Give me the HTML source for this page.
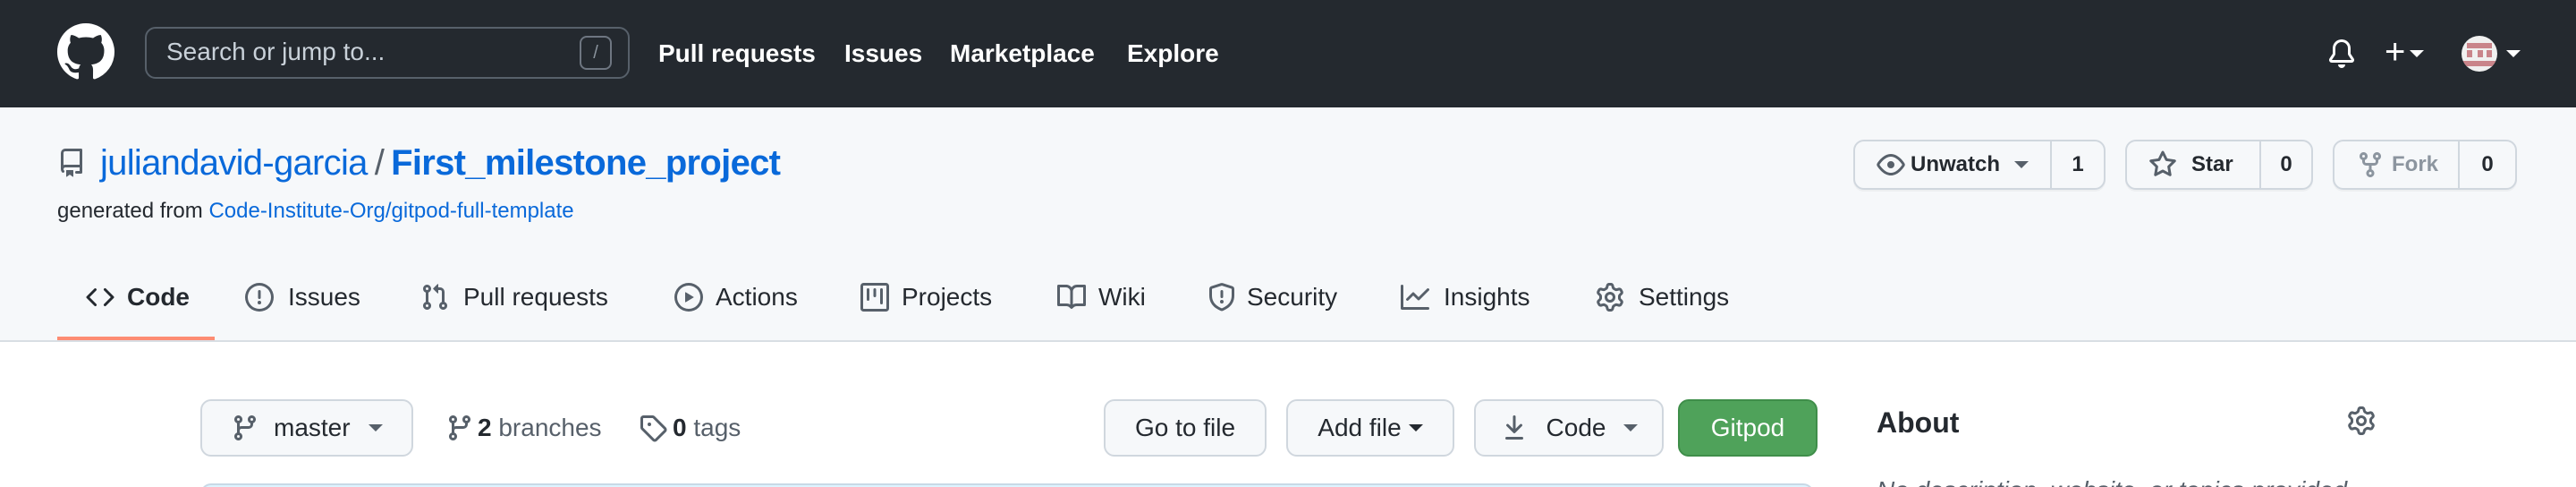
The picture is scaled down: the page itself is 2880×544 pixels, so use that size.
<!DOCTYPE html>
<html><head><meta charset="utf-8">
<style>
*{box-sizing:border-box;margin:0;padding:0}
html,body{width:2880px;height:544px;overflow:hidden;background:#fff}
#w{zoom:2;width:1440px;height:272px;position:relative;font-family:"Liberation Sans",sans-serif;color:#24292f;overflow:hidden}
.a{position:absolute}
path{fill-rule:evenodd}
.hd{left:0;top:0;width:1440px;height:60px;background:#24292f}
.nav{color:#fff;font-weight:bold;font-size:14px;top:22px}
.rh{left:0;top:60px;width:1440px;height:131px;background:#f6f8fa;border-bottom:1px solid #d8dee4}
.btn{border:1px solid #d0d7de;border-radius:6px;background:#f6f8fa;box-shadow:0 1px 0 rgba(27,31,36,.04);font-size:12px;font-weight:bold;display:flex;align-items:center}
.btn2{border:1px solid #d0d7de;border-radius:6px;background:#f6f8fa;font-size:14px;font-weight:bold;display:flex;align-items:center;justify-content:center;height:32px;top:223px}
.tab{font-size:14px;top:158px;color:#24292f}
svg{display:block}
.ic{fill:#57606a}
.car{display:inline-block;width:0;height:0;border-left:4px solid transparent;border-right:4px solid transparent;border-top:4px solid currentColor;vertical-align:middle}
</style></head><body><div id="w">
<div class="a hd"></div>
<svg class="a" style="left:32px;top:13px" width="32" height="32" viewBox="0 0 16 16"><path fill="#fff" d="M8 0C3.58 0 0 3.58 0 8c0 3.540 2.290 6.530 5.470 7.590.4.07.55-.17.55-.38 0-.19-.01-.82-.01-1.49-2.01.37-2.53-.49-2.690-.94-.09-.23-.48-.94-.82-1.130-.28-.15-.68-.52-.01-.53.63-.01 1.080.58 1.230.82.72 1.210 1.870.87 2.330.66.07-.52.28-.87.51-1.070-1.780-.2-3.640-.89-3.640-3.950 0-.87.31-1.590.82-2.150-.08-.2-.36-1.020.08-2.120 0 0 .67-.21 2.200.82.64-.18 1.320-.27 2-.27.68 0 1.360.09 2 .27 1.530-1.040 2.200-.82 2.200-.82.44 1.100.16 1.920.08 2.120.51.56.82 1.270.82 2.150 0 3.070-1.870 3.750-3.650 3.950.29.25.54.73.54 1.480 0 1.070-.01 1.930-.01 2.200 0 .21.15.46.55.38A8.013 8.013 0 0016 8c0-4.420-3.580-8-8-8z"/></svg>
<div class="a" style="left:81px;top:15px;width:271px;height:29px;border:1px solid #57606a;border-radius:6px"></div>
<div class="a" style="left:93px;top:21px;color:#c9d1d9;font-size:14px">Search or jump to...</div>
<div class="a" style="left:324px;top:20px;width:18px;height:19px;border:1px solid #6e7681;border-radius:4px;color:#8b949e;font-size:10px;text-align:center;line-height:17px">/</div>
<div class="a nav" style="left:368px">Pull requests</div>
<div class="a nav" style="left:472px">Issues</div>
<div class="a nav" style="left:531px">Marketplace</div>
<div class="a nav" style="left:630px">Explore</div>
<svg class="a" style="left:1301px;top:22px" width="16" height="16" viewBox="0 0 16 16"><path fill="#fff" d="M8 16a2 2 0 001.985-1.75c.017-.137-.097-.25-.235-.25h-3.5c-.138 0-.252.113-.235.25A2 2 0 008 16zM3 5a5 5 0 0110 0v2.947c0 .05.015.098.042.139l1.703 2.555A1.519 1.519 0 0113.482 13H2.518a1.516 1.516 0 01-1.263-2.360l1.703-2.554A.255.255 0 003 7.947V5zm5-3.5A3.5 3.5 0 004.5 5v2.947c0 .346-.102.683-.294.970l-1.703 2.556a.017.017 0 00-.003.010l.001.006c0 .002.002.004.004.006l.006.004.007.001h10.964l.007-.001.006-.004.004-.006.001-.007a.017.017 0 00-.003-.010l-1.703-2.554a1.745 1.745 0 01-.294-.970V5A3.5 3.5 0 008 1.5z"/></svg>
<div class="a" style="left:1333px;top:18px;color:#fff;font-size:20px;line-height:22px">+</div>
<span class="a car" style="left:1347px;top:28px;color:#fff"></span>
<div class="a" style="left:1376px;top:20px;width:20px;height:20px;border-radius:50%;background:#f0f0f0;overflow:hidden"><div style="position:absolute;left:3px;top:4px;width:14px;height:3px;background:#c9848a"></div><div style="position:absolute;left:3px;top:8px;width:3px;height:4px;background:#c9848a"></div><div style="position:absolute;left:9px;top:8px;width:3px;height:4px;background:#c9848a"></div><div style="position:absolute;left:14px;top:8px;width:3px;height:4px;background:#c9848a"></div><div style="position:absolute;left:0;top:14px;width:20px;height:3px;background:#c9848a"></div></div>
<span class="a car" style="left:1401px;top:28px;color:#fff"></span>

<div class="a rh"></div>
<svg class="a ic" style="left:32px;top:83px" width="16" height="16" viewBox="0 0 16 16"><path d="M2 2.5A2.5 2.5 0 014.5 0h8.75a.75.75 0 01.75.75v12.5a.75.75 0 01-.75.75h-2.5a.75.75 0 110-1.5h1.750v-2h-8a1 1 0 00-.714 1.700.75.75 0 01-1.072 1.050A2.495 2.495 0 012 11.5v-9zm10.5-1V9h-8c-.356 0-.694.074-1 .208V2.5a1 1 0 011-1h8zM5 12.25v3.25a.25.25 0 00.4.2l1.450-1.087a.25.25 0 01.3 0L8.6 15.7a.25.25 0 00.4-.2v-3.25a.25.25 0 00-.25-.25h-3.5a.25.25 0 00-.25.25z"/></svg>
<div class="a" style="left:56px;top:80px;font-size:20px;color:#0969da;letter-spacing:-0.35px">juliandavid-garcia<span style="color:#57606a;margin:0 4px">/</span><b>First_milestone_project</b></div>
<div class="a" style="left:32px;top:111px;font-size:12px;color:#24292f">generated from <span style="color:#0969da">Code-Institute-Org/gitpod-full-template</span></div>

<div class="a btn" style="left:1036px;top:78px;width:141px;height:28px">
 <div style="width:110px;display:flex;align-items:center;padding-left:12px;border-right:1px solid #d0d7de;height:100%"><svg class="ic" width="16" height="16" viewBox="0 0 16 16"><path d="M1.679 7.932c.412-.621 1.242-1.750 2.366-2.717C5.175 4.242 6.527 3.5 8 3.5c1.473 0 2.824.742 3.955 1.715 1.124.967 1.954 2.096 2.366 2.717a.119.119 0 010 .136c-.412.621-1.242 1.750-2.366 2.717C10.825 11.758 9.473 12.5 8 12.5c-1.473 0-2.824-.742-3.955-1.715C2.920 9.818 2.090 8.690 1.679 8.068a.119.119 0 010-.136zM8 2c-1.981 0-3.670.992-4.933 2.078C1.797 5.169.88 6.423.43 7.1a1.619 1.619 0 000 1.798c.45.678 1.367 1.932 2.637 3.024C4.329 13.008 6.019 14 8 14c1.981 0 3.670-.992 4.933-2.078 1.270-1.091 2.187-2.345 2.637-3.023a1.619 1.619 0 000-1.798c-.45-.678-1.367-1.932-2.637-3.023C11.671 2.992 9.981 2 8 2zm0 8a2 2 0 100-4 2 2 0 000 4z"/></svg><span style="margin-left:3px">Unwatch</span><span class="car" style="margin-left:8px;color:#57606a"></span></div>
 <div style="flex:1;text-align:center">1</div></div>
<div class="a btn" style="left:1188px;top:78px;width:105px;height:28px">
 <div style="width:75px;display:flex;align-items:center;padding-left:12px;border-right:1px solid #d0d7de;height:100%"><svg class="ic" width="16" height="16" viewBox="0 0 16 16"><path d="M8 .25a.75.75 0 01.673.418l1.882 3.815 4.210.612a.75.75 0 01.416 1.279l-3.046 2.970.719 4.192a.75.75 0 01-1.088.791L8 12.347l-3.766 1.980a.75.75 0 01-1.088-.79l.72-4.194L.818 6.374a.75.75 0 01.416-1.280l4.210-.611L7.327.668A.75.75 0 018 .25zm0 2.445L6.615 5.5a.75.75 0 01-.564.41l-3.097.45 2.240 2.184a.75.75 0 01.216.664l-.528 3.084 2.769-1.456a.75.75 0 01.698 0l2.770 1.456-.53-3.084a.75.75 0 01.216-.664l2.240-2.183-3.096-.45a.75.75 0 01-.564-.41L8 2.694z"/></svg><span style="margin-left:8px">Star</span></div>
 <div style="flex:1;text-align:center">0</div></div>
<div class="a btn" style="left:1304px;top:78px;width:103px;height:28px">
 <div style="width:70px;display:flex;align-items:center;padding-left:12px;border-right:1px solid #d0d7de;height:100%;color:#8c959f"><svg fill="#8c959f" width="16" height="16" viewBox="0 0 16 16"><path d="M5 3.25a.75.75 0 11-1.5 0 .75.75 0 011.5 0zm0 2.122a2.25 2.25 0 10-1.5 0v.878A2.25 2.25 0 005.75 8.5h1.5v2.128a2.251 2.251 0 101.5 0V8.5h1.5a2.25 2.25 0 002.25-2.25v-.878a2.25 2.25 0 10-1.5 0v.878a.75.75 0 01-.75.75h-4.5A.75.75 0 015 6.25v-.878zm3.75 7.378a.75.75 0 11-1.5 0 .75.75 0 011.5 0zm3-8.75a.75.75 0 100-1.5.75.75 0 000 1.5z"/></svg><span style="margin-left:4px">Fork</span></div>
 <div style="flex:1;text-align:center">0</div></div>

<svg class="a" style="left:48px;top:158px" width="16" height="16" viewBox="0 0 16 16" fill="#24292f"><path d="M4.72 3.22a.75.75 0 011.06 1.06L2.06 8l3.72 3.72a.75.75 0 11-1.06 1.06L.47 8.53a.75.75 0 010-1.06l4.25-4.25zm6.56 0a.75.75 0 10-1.06 1.06L13.94 8l-3.72 3.72a.75.75 0 101.06 1.06l4.25-4.25a.75.75 0 000-1.06l-4.25-4.25z"/></svg>
<div class="a tab" style="left:71px;font-weight:bold">Code</div>
<div class="a" style="left:32px;top:188px;width:88px;height:2px;background:#fd8c73"></div>
<svg class="a ic" style="left:137px;top:158px" width="16" height="16" viewBox="0 0 16 16"><path d="M8 1.5a6.5 6.5 0 100 13 6.5 6.5 0 000-13zM0 8a8 8 0 1116 0A8 8 0 010 8zm9 3a1 1 0 11-2 0 1 1 0 012 0zm-.25-6.25a.75.75 0 00-1.5 0v3.5a.75.75 0 001.5 0v-3.5z"/></svg>
<div class="a tab" style="left:161px">Issues</div>
<svg class="a ic" style="left:235px;top:158px" width="16" height="16" viewBox="0 0 16 16"><path d="M7.177 3.073L9.573.677A.25.25 0 0110 .854v4.792a.25.25 0 01-.427.177L7.177 3.427a.25.25 0 010-.354zM3.75 2.5a.75.75 0 100 1.5.75.75 0 000-1.5zm-2.25.75a2.25 2.25 0 113 2.122v5.256a2.251 2.251 0 11-1.5 0V5.372A2.25 2.25 0 011.5 3.25zM11 2.5h-1V4h1a1 1 0 011 1v5.628a2.251 2.251 0 101.5 0V5A2.5 2.5 0 0011 2.5zm1 10.25a.75.75 0 111.5 0 .75.75 0 01-1.5 0zM3.75 12a.75.75 0 100 1.5.75.75 0 000-1.5z"/></svg>
<div class="a tab" style="left:259px">Pull requests</div>
<svg class="a ic" style="left:377px;top:158px" width="16" height="16" viewBox="0 0 16 16"><path d="M1.5 8a6.5 6.5 0 1113 0 6.5 6.5 0 01-13 0zM8 0a8 8 0 100 16A8 8 0 008 0zM6.379 5.227A.25.25 0 006 5.442v5.117a.25.25 0 00.379.214l4.264-2.559a.25.25 0 000-.428L6.379 5.227z"/></svg>
<div class="a tab" style="left:400px">Actions</div>
<svg class="a ic" style="left:481px;top:158px" width="16" height="16" viewBox="0 0 16 16"><path d="M1.75 0A1.75 1.75 0 000 1.75v12.5C0 15.216.784 16 1.75 16h12.5A1.75 1.75 0 0016 14.25V1.75A1.75 1.75 0 0014.25 0H1.75zM1.5 1.75a.25.25 0 01.25-.25h12.5a.25.25 0 01.25.25v12.5a.25.25 0 01-.25.25H1.75a.25.25 0 01-.25-.25V1.75zM11.75 3a.75.75 0 00-.75.75v7.5a.75.75 0 001.5 0v-7.5a.75.75 0 00-.75-.75zm-8.25.75a.75.75 0 011.5 0v5.5a.75.75 0 01-1.5 0v-5.5zM8 3a.75.75 0 00-.75.75v3.5a.75.75 0 001.5 0v-3.5A.75.75 0 008 3z"/></svg>
<div class="a tab" style="left:504px">Projects</div>
<svg class="a ic" style="left:591px;top:158px" width="16" height="16" viewBox="0 0 16 16"><path d="M0 1.75A.75.75 0 01.75 1h4.253c1.227 0 2.317.59 3 1.501A3.744 3.744 0 0111.006 1h4.245a.75.75 0 01.75.75v10.5a.75.75 0 01-.75.75h-4.507a2.25 2.25 0 00-1.591.659l-.622.621a.75.75 0 01-1.06 0l-.622-.621A2.25 2.25 0 005.258 13H.75a.75.75 0 01-.75-.75V1.75zm8.755 3a2.25 2.25 0 012.25-2.25H14.5v9h-3.757c-.71 0-1.4.201-1.992.572l.004-7.322zm-1.504 7.324l.004-5.073-.002-2.253A2.25 2.25 0 005.003 2.5H1.5v9h3.757a3.75 3.75 0 011.994.574z"/></svg>
<div class="a tab" style="left:614px">Wiki</div>
<svg class="a ic" style="left:675px;top:158px" width="16" height="16" viewBox="0 0 16 16"><path d="M7.467.133a1.75 1.75 0 011.066 0l5.25 1.68A1.75 1.75 0 0115 3.48V7c0 1.566-.32 3.182-1.303 4.682-.983 1.498-2.585 2.813-5.032 3.855a1.7 1.7 0 01-1.33 0c-2.447-1.042-4.049-2.357-5.032-3.855C1.32 10.182 1 8.566 1 7V3.48a1.75 1.75 0 011.217-1.667l5.25-1.68zm.61 1.429a.25.25 0 00-.153 0l-5.25 1.68a.25.25 0 00-.174.238V7c0 1.358.275 2.666 1.057 3.86.784 1.194 2.121 2.34 4.366 3.297a.2.2 0 00.154 0c2.245-.956 3.582-2.104 4.366-3.298C13.225 9.666 13.5 8.36 13.5 7V3.48a.25.25 0 00-.174-.237l-5.25-1.68zM9 10.5a1 1 0 11-2 0 1 1 0 012 0zm-.25-5.75a.75.75 0 10-1.5 0v3a.75.75 0 001.5 0v-3z"/></svg>
<div class="a tab" style="left:697px">Security</div>
<svg class="a ic" style="left:783px;top:158px" width="16" height="16" viewBox="0 0 16 16"><path d="M1.5 1.75a.75.75 0 00-1.5 0v12.5c0 .414.336.75.75.75h14.5a.75.75 0 000-1.5H1.5V1.75zm14.28 2.53a.75.75 0 00-1.06-1.06L10 7.94 7.53 5.47a.75.75 0 00-1.06 0L3.22 8.72a.75.75 0 001.06 1.06L7 7.06l2.47 2.47a.75.75 0 001.06 0l5.25-5.25z"/></svg>
<div class="a tab" style="left:807px">Insights</div>
<svg class="a ic" style="left:892px;top:158px" width="16" height="16" viewBox="0 0 16 16"><path d="M7.429 1.525a6.593 6.593 0 011.142 0c.036.003.108.036.137.146l.289 1.105c.147.56.55.967.997 1.189.174.086.341.183.501.29.417.278.97.423 1.53.27l1.102-.303c.11-.03.175.016.195.046.219.31.41.641.573.989.014.031.022.11-.059.19l-.815.806c-.411.406-.562.957-.53 1.456a4.588 4.588 0 010 .582c-.032.499.119 1.05.53 1.456l.815.806c.08.08.073.159.059.19a6.494 6.494 0 01-.573.99c-.02.029-.086.074-.195.045l-1.103-.303c-.559-.153-1.112-.008-1.529.27-.16.107-.327.204-.5.29-.449.222-.851.628-.998 1.189l-.289 1.105c-.029.11-.101.143-.137.146a6.613 6.613 0 01-1.142 0c-.036-.003-.108-.037-.137-.146l-.289-1.105c-.147-.56-.55-.967-.997-1.189a4.502 4.502 0 01-.501-.29c-.417-.278-.97-.423-1.53-.27l-1.102.303c-.11.03-.175-.016-.195-.046a6.492 6.492 0 01-.573-.989c-.014-.031-.022-.11.059-.19l.815-.806c.411-.406.562-.957.53-1.456a4.587 4.587 0 010-.582c.032-.499-.119-1.05-.53-1.456l-.815-.806c-.08-.08-.073-.159-.059-.19a6.44 6.44 0 01.573-.99c.02-.029.086-.075.195-.045l1.103.303c.559.153 1.112.008 1.529-.27.16-.107.327-.204.5-.29.449-.222.851-.628.998-1.189l.289-1.105c.029-.11.101-.143.137-.146zM8 0c-.236 0-.47.01-.701.03-.743.065-1.29.615-1.458 1.261l-.29 1.106c-.017.066-.078.158-.211.224a5.994 5.994 0 00-.668.386c-.123.082-.233.09-.3.071L3.27 2.776c-.644-.177-1.392.02-1.82.63a7.977 7.977 0 00-.704 1.217c-.315.675-.111 1.422.363 1.891l.815.806c.05.048.098.147.088.294a6.084 6.084 0 000 .772c.01.147-.038.246-.088.294l-.815.806c-.474.469-.678 1.216-.363 1.891.2.428.436.835.704 1.218.428.609 1.176.806 1.82.63l1.103-.303c.066-.019.176-.011.299.071.213.143.436.272.668.386.133.066.194.158.212.224l.289 1.106c.169.646.715 1.196 1.458 1.26a8.094 8.094 0 001.402 0c.743-.064 1.29-.614 1.458-1.26l.29-1.106c.017-.066.078-.158.211-.224a5.98 5.98 0 00.668-.386c.123-.082.233-.09.3-.071l1.102.302c.644.177 1.392-.02 1.82-.63.268-.382.505-.789.704-1.217.315-.675.111-1.422-.364-1.891l-.814-.806c-.05-.048-.098-.147-.088-.294a6.1 6.1 0 000-.772c-.01-.147.039-.246.088-.294l.814-.806c.475-.469.679-1.216.364-1.891a7.992 7.992 0 00-.704-1.218c-.428-.609-1.176-.806-1.82-.63l-1.103.303c-.066.019-.176.011-.299-.071a5.991 5.991 0 00-.668-.386c-.133-.066-.194-.158-.212-.224L10.16 1.29C9.99.645 9.444.095 8.701.031A8.094 8.094 0 008 0zm1.5 8a1.5 1.5 0 11-3 0 1.5 1.5 0 013 0zM11 8a3 3 0 11-6 0 3 3 0 016 0z"/></svg>
<div class="a tab" style="left:916px">Settings</div>

<div class="a btn2" style="left:112px;width:119px;justify-content:flex-start;padding-left:16px;font-weight:normal"><svg class="ic" width="16" height="16" viewBox="0 0 16 16"><path d="M11.75 2.5a.75.75 0 100 1.5.75.75 0 000-1.5zm-2.25.75a2.25 2.25 0 113 2.122V6A2.5 2.5 0 0110 8.5H6a1 1 0 00-1 1v1.128a2.251 2.251 0 11-1.5 0V5.372a2.25 2.25 0 111.5 0v1.836A2.492 2.492 0 016 7h4a1 1 0 001-1v-.628A2.25 2.25 0 019.5 3.25zM4.25 12a.75.75 0 100 1.5.75.75 0 000-1.5zM3.5 3.25a.75.75 0 111.5 0 .75.75 0 01-1.5 0z"/></svg><span style="margin-left:8px">master</span><span class="car" style="margin-left:10px;color:#57606a"></span></div>
<svg class="a ic" style="left:249px;top:231px" width="16" height="16" viewBox="0 0 16 16"><path d="M11.75 2.5a.75.75 0 100 1.5.75.75 0 000-1.5zm-2.25.75a2.25 2.25 0 113 2.122V6A2.5 2.5 0 0110 8.5H6a1 1 0 00-1 1v1.128a2.251 2.251 0 11-1.5 0V5.372a2.25 2.25 0 111.5 0v1.836A2.492 2.492 0 016 7h4a1 1 0 001-1v-.628A2.25 2.25 0 019.5 3.25zM4.25 12a.75.75 0 100 1.5.75.75 0 000-1.5zM3.5 3.25a.75.75 0 111.5 0 .75.75 0 01-1.5 0z"/></svg>
<div class="a" style="left:267px;top:231px;font-size:14px;color:#57606a"><b style="color:#24292f">2</b> branches</div>
<svg class="a ic" style="left:357px;top:231px" width="16" height="16" viewBox="0 0 16 16"><path d="M2.5 7.775V2.75a.25.25 0 01.25-.25h5.025a.25.25 0 01.177.073l6.25 6.25a.25.25 0 010 .354l-5.025 5.025a.25.25 0 01-.354 0l-6.25-6.25a.25.25 0 01-.073-.177zm-1.5 0V2.75C1 1.784 1.784 1 2.75 1h5.025c.464 0 .91.184 1.238.513l6.25 6.25a1.75 1.75 0 010 2.474l-5.026 5.026a1.75 1.75 0 01-2.474 0l-6.25-6.25A1.75 1.75 0 011 7.775zM6 5a1 1 0 100 2 1 1 0 000-2z"/></svg>
<div class="a" style="left:376px;top:231px;font-size:14px;color:#57606a"><b style="color:#24292f">0</b> tags</div>

<div class="a btn2" style="left:617px;width:91px;font-weight:normal">Go to file</div>
<div class="a btn2" style="left:719px;width:94px;font-weight:normal">Add file<span class="car" style="margin-left:4px"></span></div>
<div class="a btn2" style="left:824px;width:106px;font-weight:normal"><svg class="ic" width="16" height="16" viewBox="0 0 16 16"><path d="M7.47 10.78a.75.75 0 001.06 0l3.75-3.75a.75.75 0 00-1.06-1.06L8.75 8.44V1.75a.75.75 0 00-1.5 0v6.69L4.78 5.97a.75.75 0 00-1.06 1.06l3.75 3.75zM3.75 13a.75.75 0 000 1.5h8.5a.75.75 0 000-1.5h-8.5z"/></svg><span style="margin-left:10px">Code</span><span class="car" style="margin-left:10px;color:#57606a"></span></div>
<div class="a btn2" style="left:938px;width:78px;background:#4fa25a;border-color:#3f8e4a;color:#fff;font-weight:normal">Gitpod</div>

<div class="a" style="left:1049px;top:227px;font-size:16px;font-weight:bold">About</div>
<svg class="a ic" style="left:1312px;top:227px" width="16" height="16" viewBox="0 0 16 16"><path d="M7.429 1.525a6.593 6.593 0 011.142 0c.036.003.108.036.137.146l.289 1.105c.147.56.55.967.997 1.189.174.086.341.183.501.29.417.278.97.423 1.53.27l1.102-.303c.11-.03.175.016.195.046.219.31.41.641.573.989.014.031.022.11-.059.19l-.815.806c-.411.406-.562.957-.53 1.456a4.588 4.588 0 010 .582c-.032.499.119 1.05.53 1.456l.815.806c.08.08.073.159.059.19a6.494 6.494 0 01-.573.99c-.02.029-.086.074-.195.045l-1.103-.303c-.559-.153-1.112-.008-1.529.27-.16.107-.327.204-.5.29-.449.222-.851.628-.998 1.189l-.289 1.105c-.029.11-.101.143-.137.146a6.613 6.613 0 01-1.142 0c-.036-.003-.108-.037-.137-.146l-.289-1.105c-.147-.56-.55-.967-.997-1.189a4.502 4.502 0 01-.501-.29c-.417-.278-.97-.423-1.53-.27l-1.102.303c-.11.03-.175-.016-.195-.046a6.492 6.492 0 01-.573-.989c-.014-.031-.022-.11.059-.19l.815-.806c.411-.406.562-.957.53-1.456a4.587 4.587 0 010-.582c.032-.499-.119-1.050-.53-1.456l-.815-.806c-.08-.08-.073-.159-.059-.19a6.44 6.44 0 01.573-.99c.02-.029.086-.075.195-.045l1.103.303c.559.153 1.112.008 1.529-.27.16-.107.327-.204.5-.29.449-.222.851-.628.998-1.189l.289-1.105c.029-.11.101-.143.137-.146zM8 0c-.236 0-.47.01-.701.03-.743.065-1.29.615-1.458 1.261l-.29 1.106c-.017.066-.078.158-.211.224a5.994 5.994 0 00-.668.386c-.123.082-.233.09-.3.071L3.27 2.776c-.644-.177-1.392.02-1.82.63a7.977 7.977 0 00-.704 1.217c-.315.675-.111 1.422.363 1.891l.815.806c.05.048.098.147.088.294a6.084 6.084 0 000 .772c.01.147-.038.246-.088.294l-.815.806c-.474.469-.678 1.216-.363 1.891.2.428.436.835.704 1.218.428.609 1.176.806 1.82.63l1.103-.303c.066-.019.176-.011.299.071.213.143.436.272.668.386.133.066.194.158.212.224l.289 1.106c.169.646.715 1.196 1.458 1.26a8.094 8.094 0 001.402 0c.743-.064 1.29-.614 1.458-1.26l.29-1.106c.017-.066.078-.158.211-.224a5.98 5.98 0 00.668-.386c.123-.082.233-.09.3-.071l1.102.302c.644.177 1.392-.02 1.82-.63.268-.382.505-.789.704-1.217.315-.675.111-1.422-.364-1.891l-.814-.806c-.05-.048-.098-.147-.088-.294a6.1 6.1 0 000-.772c-.01-.147.039-.246.088-.294l.814-.806c.475-.469.679-1.216.364-1.891a7.992 7.992 0 00-.704-1.218c-.428-.609-1.176-.806-1.82-.63l-1.103.303c-.066.019-.176.011-.299-.071a5.991 5.991 0 00-.668-.386c-.133-.066-.194-.158-.212-.224L10.16 1.29C9.99.645 9.444.095 8.701.031A8.094 8.094 0 008 0zm1.5 8a1.5 1.5 0 11-3 0 1.5 1.5 0 013 0zM11 8a3 3 0 11-6 0 3 3 0 016 0z"/></svg>
<div class="a" style="left:112px;top:270px;width:902px;height:10px;background:#ddf4ff;border:1px solid #c8d9e6;border-radius:6px 6px 0 0"></div>
<div class="a" style="left:1049px;top:266px;font-size:14px;font-style:italic;color:#57606a">No description, website, or topics provided.</div>
</div></body></html>
